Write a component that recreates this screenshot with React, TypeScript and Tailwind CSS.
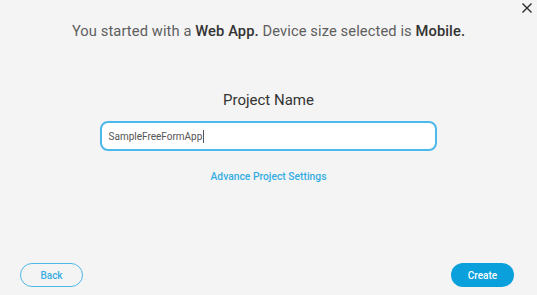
import React from "react";

export default function App() {
  return (
    <div
      className="w-[537px] h-[295px] bg-[#f4f4f4] flex flex-col relative overflow-hidden"
      style={{ fontFamily: "Roboto, 'Liberation Sans', sans-serif" }}
    >
      <button className="absolute right-[5px] top-[3px] w-[10px] h-[10px] flex items-center justify-center">
        <svg width="10" height="10" viewBox="0 0 10 10">
          <path d="M0.5 0.5 L9.5 9.5 M9.5 0.5 L0.5 9.5" stroke="#2b2b2b" strokeWidth="1.4" />
        </svg>
      </button>
      <div className="pt-[21px] text-center text-[14.7px] leading-[20px] text-[#5e5e5e] tracking-[0.1px]">
        You started with a <span className="font-medium text-[#333]">Web App.</span> Device size selected is{" "}
        <span className="font-medium text-[#333]">Mobile.</span>
      </div>
      <div className="mt-[49px] text-center text-[15px] leading-[20px] text-[#333]">Project Name</div>
      <div className="mt-[11px] flex justify-center">
        <div className="w-[337px] h-[30px] ml-[-1px] rounded-[8px] border-2 border-[#4db8ea] bg-white flex items-center pl-[7px] text-[10px] text-[#555]">
          SampleFreeFormApp<span className="inline-block w-[1px] h-[13px] bg-[#555] ml-[1px]" />
        </div>
      </div>
      <div className="mt-[19px] text-center text-[10.3px] font-medium leading-[14px] text-[#36ade2]">
        Advance Project Settings
      </div>
      <div className="mt-auto mb-[8px] flex justify-between px-[20px] pr-[23px]">
        <button className="w-[63px] h-[24px] rounded-full border-[1.5px] border-[#4db8ea] text-[#3aaee2] text-[10px] font-medium">
          Back
        </button>
        <button className="w-[63px] h-[24px] rounded-full bg-[#0aa0dc] text-white text-[10px] font-medium">
          Create
        </button>
      </div>
    </div>
  );
}
